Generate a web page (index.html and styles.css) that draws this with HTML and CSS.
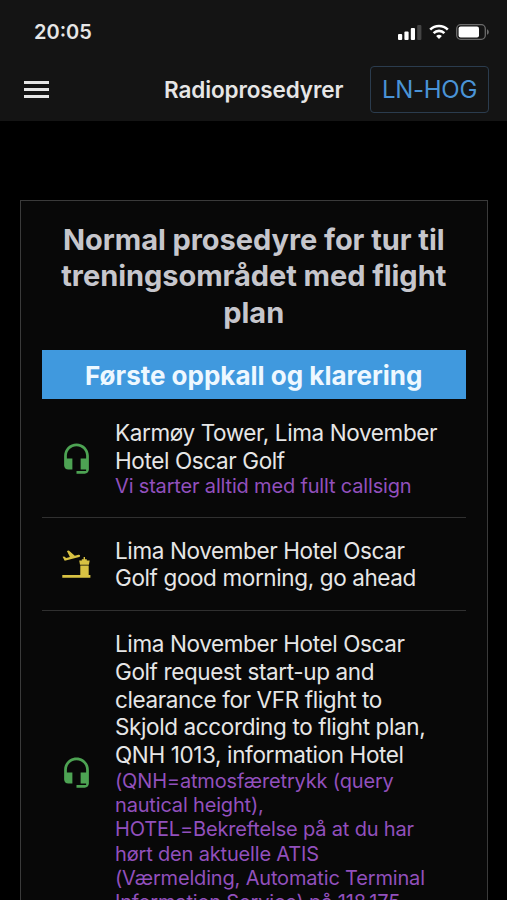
FILE: index.html
```html
<!doctype html>
<html lang="no">
<head>
<meta charset="utf-8">
<title>Radioprosedyrer</title>
<link rel="stylesheet" href="styles.css">
</head>

<body>
<div class="header">
	<div class="status">
		<span class="time">20:05</span>
		<div class="signals">
			<svg class="bars" viewBox="0 0 24 16">
				<rect x="0" y="10" width="4.2" height="6" rx="1"/>
				<rect x="6.4" y="7.5" width="4.2" height="8.5" rx="1"/>
				<rect x="12.8" y="4" width="4.2" height="12" rx="1"/>
				<rect class="off" x="19.2" y="1" width="4.2" height="15" rx="1"/>
			</svg>
			<svg class="wifi" viewBox="0 0 20 15">
				<path d="M1.2 5.6a12.6 12.6 0 0 1 17.6 0M4.6 9.1a7.7 7.7 0 0 1 10.8 0"/>
				<path class="dot" d="M10 15l-2.9-2.9a4.2 4.2 0 0 1 5.8 0z"/>
			</svg>
			<svg class="battery" viewBox="0 0 33 16">
				<rect class="shell" x=".7" y=".7" width="28.6" height="14.6" rx="4"/>
				<rect class="level" x="2.6" y="2.6" width="20.4" height="10.8" rx="2"/>
				<path class="cap" d="M31 5.2c2.4 1 2.4 4.6 0 5.6z"/>
			</svg>
		</div>
	</div>
	<div class="nav">
		<a class="menu"><span></span><span></span><span></span></a>
		<h1>Radioprosedyrer</h1>
		<a class="callsign">LN-HOG</a>
	</div>
</div>

<div class="card">
	<h2>Normal prosedyre for tur til<br>treningsområdet med flight<br>plan</h2>
	<h3>Første oppkall og klarering</h3>
	<div class="item">
		<svg class="icon pilot" viewBox="0 0 24 24"><path d="M12 1c-4.97 0-9 4.03-9 9v7c0 1.66 1.34 3 3 3h3v-8H5v-2c0-3.87 3.13-7 7-7s7 3.13 7 7v2h-4v8h4v1h-7v2h6c1.66 0 3-1.34 3-3V10c0-4.97-4.03-9-9-9z"/></svg>
		<div class="text">
			<p>Karmøy Tower, Lima November<br>Hotel Oscar Golf</p>
			<p class="note">Vi starter alltid med fullt callsign</p>
		</div>
	</div>
	<div class="item">
		<svg class="icon tower" viewBox="0 0 33 33">
			<path d="M2.3 26.9h18V17.5h8.4v9.4h1.7v2.8H2.3z"/>
			<path d="M20 16.7l-.8-4.2h2.6v-1.3h1.8V9h1.4v2.2h1.8v1.3h2.9l-.8 4.2z"/>
			<path d="M2.6 8.8l1.6-.4 2 1.6 3.7-1.1-3-5.8 1.9-.5 6 5.1 3.7-1c1.7-.4 2.3 1.7.7 2.2L4.7 12.8z"/>
		</svg>
		<div class="text">
			<p>Lima November Hotel Oscar<br>Golf good morning, go ahead</p>
		</div>
	</div>
	<div class="item">
		<svg class="icon pilot" viewBox="0 0 24 24"><path d="M12 1c-4.97 0-9 4.03-9 9v7c0 1.66 1.34 3 3 3h3v-8H5v-2c0-3.87 3.13-7 7-7s7 3.13 7 7v2h-4v8h4v1h-7v2h6c1.66 0 3-1.34 3-3V10c0-4.97-4.03-9-9-9z"/></svg>
		<div class="text">
			<p>Lima November Hotel Oscar<br>Golf request start-up and<br>clearance for VFR flight to<br>Skjold according to flight plan,<br>QNH 1013, information Hotel</p>
			<p class="note">(QNH=atmosfæretrykk (query<br>nautical height),<br>HOTEL=Bekreftelse på at du har<br>hørt den aktuelle ATIS<br>(Værmelding, Automatic Terminal<br>Information Service) på 118.175</p>
		</div>
	</div>
</div>
</body>
</html>
```
FILE: styles.css
```css
*{
	box-sizing:border-box;
	margin:0;
	padding:0;
	}
body{
	height:900px;
	overflow:hidden;
	background:#000;
	color:#e6e6e6;
	font-family:Inter, "Liberation Sans", sans-serif;
	}
.header{
	height:121px;
	background:#141414;
	}
.status{
	height:63px;
	padding:0 18px 0 34px;
	display:flex;
	justify-content:space-between;
	align-items:center;
	}
.time{
	font-size:20px;
	font-weight:600;
	}
.signals{
	display:flex;
	align-items:center;
	gap:7px;
	}
.signals svg{
	display:block;
	fill:#fff;
	}
.bars{
	width:24px;
	height:16px;
	}
.bars .off{
	fill:#444;
	}
.wifi{
	width:20px;
	height:15px;
	}
.wifi path{
	fill:none;
	stroke:#fff;
	stroke-width:2.6;
	}
.wifi .dot{
	fill:#fff;
	stroke:none;
	}
.battery{
	width:33px;
	height:16px;
	}
.battery .shell{
	fill:none;
	stroke:#6c6c6c;
	stroke-width:1.3;
	}
.battery .cap{
	fill:#6c6c6c;
	}
.nav{
	height:53px;
	padding:0 18px 0 24px;
	display:flex;
	align-items:center;
	}
.menu{
	width:25px;
	display:flex;
	flex-direction:column;
	gap:4px;
	}
.menu span{
	height:3px;
	background:#e6e6e6;
	}
.nav h1{
	margin-left:115px;
	width:206px;
	font-size:22.5px;
	font-weight:600;
	letter-spacing:-0.12px;
	white-space:nowrap;
	}
.callsign{
	width:119px;
	height:47px;
	border:1px solid #2b3c4e;
	border-radius:4px;
	color:#4a93d6;
	font-size:24px;
	line-height:45px;
	letter-spacing:-0.3px;
	text-align:center;
	white-space:nowrap;
	}
.card{
	margin:79px 19px 0 20px;
	padding:21px 21px 0 20.5px;
	height:700px;
	border:1px solid #3a3a3a;
	border-bottom:0;
	background:#080808;
	}
.card h2{
	color:#c6c6cc;
	font-size:29px;
	font-weight:700;
	line-height:36.3px;
	letter-spacing:-0.05px;
	text-align:center;
	white-space:nowrap;
	}
.card h3{
	margin-top:19.5px;
	height:49px;
	background:#4099de;
	color:#eef8ff;
	font-size:26px;
	font-weight:700;
	line-height:51px;
	text-align:center;
	white-space:nowrap;
	}
.item{
	padding:19px 0 18px 18.5px;
	border-bottom:1px solid #303030;
	display:flex;
	align-items:center;
	gap:22px;
	}
.card h3 + .item{
	padding-top:19.6px;
	}
.icon{
	flex:none;
	width:33px;
	height:33px;
	}
.pilot{
	fill:#4da353;
	}
.tower{
	fill:#d8c243;
	}
.text{
	font-size:22.5px;
	line-height:27.7px;
	letter-spacing:-0.38px;
	white-space:nowrap;
	}
.note{
	color:#9250bd;
	font-size:20px;
	line-height:24.3px;
	letter-spacing:-0.17px;
	}
```
